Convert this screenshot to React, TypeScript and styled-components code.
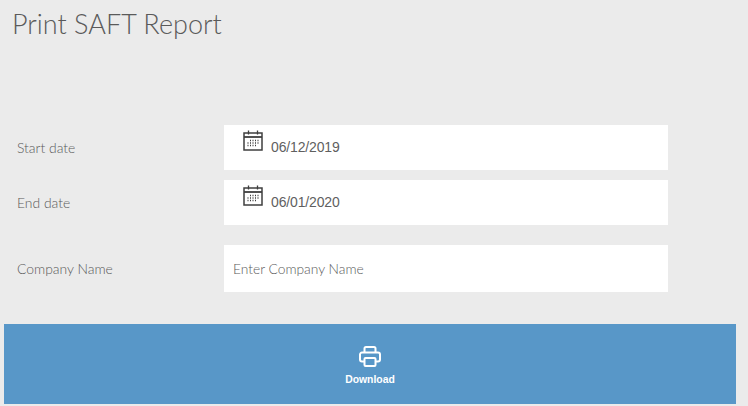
import styled, { createGlobalStyle } from 'styled-components';

const GlobalStyle = createGlobalStyle`
  html, body {
    margin: 0;
    padding: 0;
    background: #ebebeb;
    font-family: 'Lato', 'Liberation Sans', sans-serif;
  }
`;

const Page = styled.div`
  width: 748px;
  height: 406px;
  overflow: hidden;
  box-sizing: border-box;
  padding-top: 8px;
`;

const Title = styled.h1`
  margin: 0 0 0 12px;
  height: 117px;
  font-size: 27px;
  line-height: 32px;
  font-weight: 300;
  color: #5a5a5a;
`;

const Row = styled.div<{ $height: number; $gap: number }>`
  display: flex;
  align-items: stretch;
  height: ${({ $height }) => $height}px;
  margin-bottom: ${({ $gap }) => $gap}px;
`;

const Label = styled.label`
  width: 224px;
  box-sizing: border-box;
  padding: 0 0 0 17px;
  display: flex;
  align-items: center;
  font-size: 13.9px;
  font-weight: 300;
  color: #5a5a5a;
`;

const Field = styled.div`
  width: 444px;
  background: #fff;
  box-sizing: border-box;
  display: flex;
`;

const DateField = styled(Field)`
  padding: 5px 0 0 19px;
  align-items: flex-start;
`;

const DateValue = styled.span`
  margin: 8px 0 0 7px;
  font-family: 'Liberation Sans', Arial, sans-serif;
  font-size: 14px;
  letter-spacing: -0.15px;
  line-height: 18px;
  color: #5f5f5f;
`;

const TextInput = styled.input`
  flex: 1;
  border: 0;
  outline: 0;
  background: transparent;
  padding: 0 0 0 9px;
  font-family: 'Lato', 'Liberation Sans', sans-serif;
  font-size: 13.8px;
  font-weight: 300;

  &::placeholder {
    color: #5a5a5a;
    opacity: 1;
  }
`;

const DownloadButton = styled.button`
  display: flex;
  flex-direction: column;
  align-items: center;
  width: 732px;
  height: 80px;
  margin: 0 0 0 4px;
  padding: 22px 0 0;
  box-sizing: border-box;
  border: 0;
  background: #5897c8;
  color: #fff;
  font-family: 'Liberation Sans', Arial, sans-serif;
  font-size: 10.4px;
  font-weight: 700;
  gap: 6px;
  line-height: 14px;
`;

function CalendarIcon() {
  return (
    <svg width="21" height="21" viewBox="0 0 21 21" fill="none" stroke="#3f3f3f" aria-hidden="true">
      <rect x="1" y="3" width="18" height="17" strokeWidth="1.5" />
      <path d="M1 7h18" strokeWidth="1.8" />
      <path d="M5.5 0.5v4M14.5 0.5v4" strokeWidth="1.3" />
      <path
        d="M7 10.5h1M9.5 10.5h1M12 10.5h1M14.5 10.5h1M4.5 13h1M7 13h1M9.5 13h1M12 13h1M14.5 13h1M4.5 15.5h1M7 15.5h1M9.5 15.5h1M12 15.5h1"
        strokeWidth="1.3"
      />
    </svg>
  );
}

function PrinterIcon() {
  return (
    <svg width="22" height="21" viewBox="0 0 22 21" fill="none" stroke="#fff" strokeWidth="2" aria-hidden="true">
      <path d="M5.5 6.5V2.5a1.5 1.5 0 0 1 1.5-1.5h8a1.5 1.5 0 0 1 1.5 1.5v4" />
      <path d="M5 15.5H3a2 2 0 0 1-2-2v-5a2 2 0 0 1 2-2h16a2 2 0 0 1 2 2v5a2 2 0 0 1-2 2h-2" />
      <rect x="5.5" y="12" width="11" height="8" rx="1" />
    </svg>
  );
}

export default function App() {
  return (
    <Page>
      <GlobalStyle />
      <Title>Print SAFT Report</Title>
      <Row $height={45} $gap={10}>
        <Label>Start date</Label>
        <DateField>
          <CalendarIcon />
          <DateValue>06/12/2019</DateValue>
        </DateField>
      </Row>
      <Row $height={45} $gap={20}>
        <Label>End date</Label>
        <DateField>
          <CalendarIcon />
          <DateValue>06/01/2020</DateValue>
        </DateField>
      </Row>
      <Row $height={47} $gap={32}>
        <Label>Company Name</Label>
        <Field>
          <TextInput placeholder="Enter Company Name" />
        </Field>
      </Row>
      <DownloadButton>
        <PrinterIcon />
        Download
      </DownloadButton>
    </Page>
  );
}
